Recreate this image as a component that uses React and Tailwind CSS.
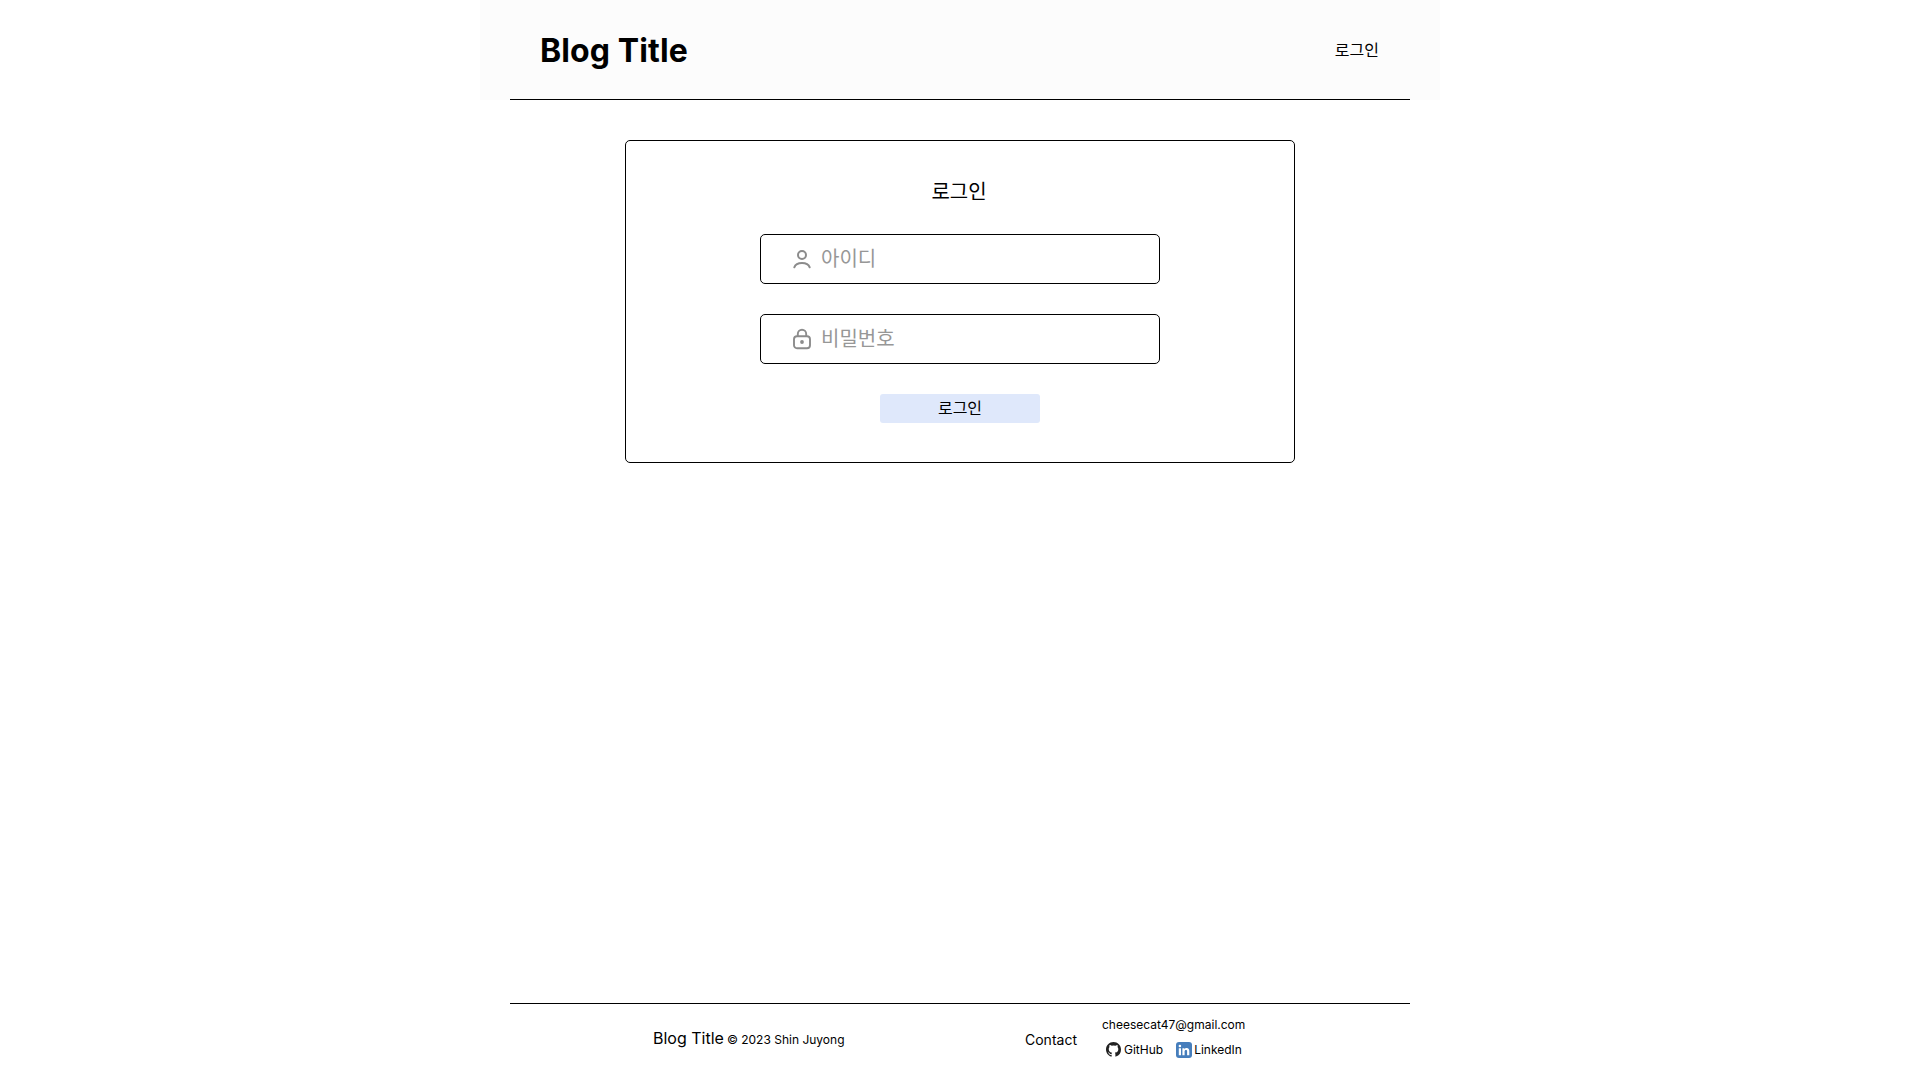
const UserIcon = () => (
  <svg className="block size-6" viewBox="0 0 24 24" fill="none" stroke="#8c8c8c" strokeWidth="2" strokeLinecap="round">
    <circle cx="12" cy="8" r="4" />
    <path d="M4.300 20.300c.9-2.500 3.900-4.300 7.700-4.300s6.800 1.800 7.700 4.300" />
  </svg>
);

const LockIcon = () => (
  <svg className="block size-6" viewBox="0 0 24 24" fill="none" stroke="#8c8c8c" strokeWidth="1.9" strokeLinecap="round">
    <rect x="4" y="9.200" width="16" height="12" rx="3" />
    <path d="M7.800 9V7a4.200 4.200 0 0 1 8.400 0v2" />
    <circle cx="12" cy="15" r="1.900" fill="#8c8c8c" stroke="none" />
  </svg>
);

const GithubIcon = () => (
  <svg className="block size-[15px]" viewBox="0 0 16 16" fill="#222">
    <path d="M8 0C3.580 0 0 3.580 0 8c0 3.540 2.290 6.530 5.470 7.590.4.070.55-.17.55-.38 0-.19-.01-.82-.01-1.490-2.010.37-2.530-.49-2.690-.94-.09-.23-.48-.94-.82-1.130-.28-.15-.68-.52-.01-.53.63-.01 1.080.58 1.230.82.72 1.210 1.870.87 2.330.66.07-.52.28-.87.51-1.070-1.780-.2-3.640-.89-3.640-3.950 0-.87.31-1.590.82-2.150-.08-.2-.36-1.020.08-2.120 0 0 .67-.21 2.200.82a7.600 7.600 0 0 1 4 0c1.530-1.040 2.200-.82 2.200-.82.44 1.100.16 1.920.08 2.120.51.56.82 1.270.82 2.150 0 3.070-1.870 3.750-3.650 3.950.29.25.54.73.54 1.480 0 1.070-.01 1.930-.01 2.200 0 .21.15.46.55.38A8.010 8.010 0 0 0 16 8c0-4.420-3.580-8-8-8z" />
  </svg>
);

const LinkedinIcon = () => (
  <svg className="block size-4" viewBox="0 0 16 16">
    <rect width="16" height="16" rx="3" fill="#467ebc" />
    <g fill="#fff">
      <circle cx="3.900" cy="4" r="1.300" />
      <path d="M2.800 6.200H5v7H2.800zM6.400 6.200h2.100v1c.4-.7 1.200-1.200 2.200-1.200 2 0 2.600 1.300 2.600 3.200v4h-2.200V9.600c0-1-.2-1.700-1.100-1.700-1 0-1.400.7-1.400 1.700v3.600H6.400z" />
    </g>
  </svg>
);

const Field = ({ icon, label }) => (
  <label className="flex h-[50px] w-[400px] items-center rounded-[5px] border border-black pl-[29px]">
    {icon}
    <span className="ml-[7px] text-xl leading-6 text-[#979797]">{label}</span>
  </label>
);

export default function App() {
  return (
    <div className="flex h-screen flex-col bg-white font-['Inter','Noto_Sans_CJK_KR',sans-serif] text-black">
      <div className="mx-auto flex w-[960px] flex-1 flex-col">
        <header className="h-[100px] bg-[#fcfcfc] px-[30px]">
          <div className="flex h-full items-center justify-between border-b border-black pr-[31px] pl-[30px]">
            <h1 className="pt-[2px] text-[32px] leading-10 font-bold tracking-[0.1px]">Blog Title</h1>
            <a className="text-base leading-5">로그인</a>
          </div>
        </header>
        <main className="flex-1 pt-10">
          <form className="mx-auto flex h-[323px] w-[670px] flex-col items-center rounded-[5px] border border-black pt-[39px]">
            <h2 className="pr-[2px] text-xl leading-6">로그인</h2>
            <div className="mt-[30px] flex flex-col gap-[30px]">
              <Field icon={<UserIcon />} label="아이디" />
              <Field icon={<LockIcon />} label="비밀번호" />
            </div>
            <button type="button" className="mt-[30px] flex h-[29px] w-40 items-center justify-center rounded-[3px] bg-[#dfe8fb] pb-[2px] text-base leading-5">
              로그인
            </button>
          </form>
        </main>
        <footer className="mx-[30px] flex h-[77px] border-t border-black">
          <div className="ml-[143px] flex w-[372px] items-baseline gap-[3px] pt-[24px]">
            <span className="text-base leading-5">Blog Title</span>
            <span className="text-xs">© 2023 Shin Juyong</span>
          </div>
          <div className="w-[77px] pt-[27px] text-sm leading-[17px]">Contact</div>
          <div className="pt-[13px] text-xs leading-[15px]">
            <div>cheesecat47@gmail.com</div>
            <div className="mt-[9px] flex h-4 items-center pl-1">
              <GithubIcon />
              <span className="ml-[3px]">GitHub</span>
              <span className="ml-[13px] pt-px"><LinkedinIcon /></span>
              <span className="ml-[2px]">LinkedIn</span>
            </div>
          </div>
        </footer>
      </div>
    </div>
  );
}
